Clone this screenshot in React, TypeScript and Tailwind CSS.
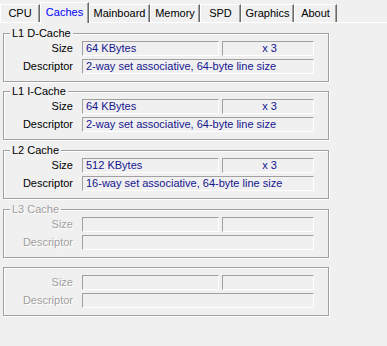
const tabs = [
  { label: 'CPU', w: 'w-[40px]' },
  { label: 'Caches', w: 'w-[49px]', active: true },
  { label: 'Mainboard', w: 'w-[61px]' },
  { label: 'Memory', w: 'w-[50px]' },
  { label: 'SPD', w: 'w-[41px]' },
  { label: 'Graphics', w: 'w-[53px]' },
  { label: 'About', w: 'w-[43px]' },
];

interface CacheGroup {
  title: string;
  size?: string;
  count?: string;
  descriptor?: string;
  disabled?: boolean;
  mt: string;
}

const groups: CacheGroup[] = [
  { title: 'L1 D-Cache', size: '64 KBytes', count: 'x 3', descriptor: '2-way set associative, 64-byte line size', mt: 'mt-[10px]' },
  { title: 'L1 I-Cache', size: '64 KBytes', count: 'x 3', descriptor: '2-way set associative, 64-byte line size', mt: 'mt-[9px]' },
  { title: 'L2 Cache', size: '512 KBytes', count: 'x 3', descriptor: '16-way set associative, 64-byte line size', mt: 'mt-[10px]' },
  { title: 'L3 Cache', disabled: true, mt: 'mt-[10px]' },
  { title: '', disabled: true, mt: 'mt-[9px]' },
];

function Tab({ label, w, active }: { label: string; w: string; active?: boolean }) {
  if (active) {
    return (
      <div
        className={`relative z-10 flex h-[21px] ${w} items-center justify-center border-l border-t border-r border-l-white border-t-white border-r-[#696969] bg-[#f0f0f0] pb-[2px] text-[#0000ff] shadow-[inset_-1px_0_0_#a0a0a0] -mb-px`}
      >
        {label}
      </div>
    );
  }
  return (
    <div
      className={`flex h-[18px] ${w} items-center justify-center border-l border-t border-r border-l-white border-t-white border-r-[#696969] bg-[#f0f0f0] text-black shadow-[inset_-1px_0_0_#a0a0a0]`}
    >
      {label}
    </div>
  );
}

function Field({ children, className, center, disabled }: { children?: React.ReactNode; className: string; center?: boolean; disabled?: boolean }) {
  return (
    <div
      className={`flex h-[15px] items-center border-l border-t border-r border-b border-l-[#a0a0a0] border-t-[#a0a0a0] border-r-white border-b-white pl-[3px] leading-none ${center ? 'justify-center pl-0' : ''} ${disabled ? '' : 'text-[#15158f]'} ${className}`}
    >
      {children}
    </div>
  );
}

function Group({ g }: { g: CacheGroup }) {
  const labelCls = g.disabled
    ? 'text-[#a0a0a0] [text-shadow:1px_1px_0_#ffffff]'
    : 'text-black';
  return (
    <div
      className={`relative ${g.mt} h-[49px] w-[326px] border border-[#a0a0a0] shadow-[inset_1px_1px_0_#ffffff,1px_1px_0_#ffffff]`}
    >
      {g.title && (
        <span className={`absolute left-[6px] top-[-8px] bg-[#f0f0f0] px-[2px] leading-[14px] ${labelCls}`}>
          {g.title}
        </span>
      )}
      <div className="mt-[7px] flex items-center">
        <span className={`w-[69px] text-right ${labelCls}`}>Size</span>
        <Field className="ml-[9px] w-[137px]" disabled={g.disabled}>{g.size}</Field>
        <Field className="ml-[3px] w-[92px]" center disabled={g.disabled}>{g.count}</Field>
      </div>
      <div className="mt-[3px] flex items-center">
        <span className={`w-[69px] text-right ${labelCls}`}>Descriptor</span>
        <Field className="ml-[9px] w-[232px]" disabled={g.disabled}>{g.descriptor}</Field>
      </div>
    </div>
  );
}

export default function App() {
  return (
    <div className="h-[346px] w-[387px] overflow-hidden bg-[#f0f0f0] font-['Liberation_Sans',Arial,sans-serif] text-[11px] leading-[13px]">
      <div className="flex h-[23px] items-end border-b border-white">
        {tabs.map((t) => (
          <Tab key={t.label} {...t} />
        ))}
      </div>
      <div className="pl-[3px]">
        {groups.map((g, i) => (
          <Group key={i} g={g} />
        ))}
      </div>
    </div>
  );
}
